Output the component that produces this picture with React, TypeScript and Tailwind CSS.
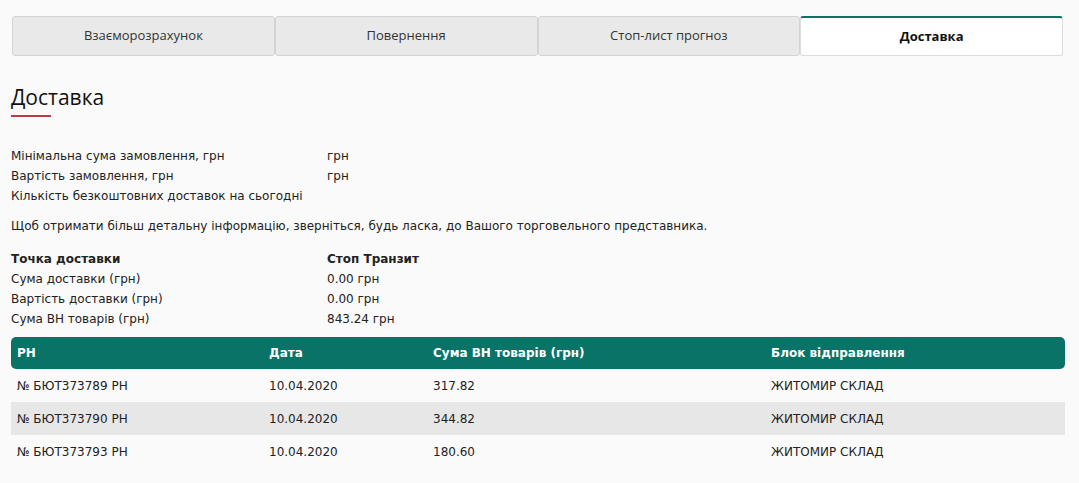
import { useState } from 'react'

const TABS = ['Взаєморозрахунок', 'Повернення', 'Стоп-лист прогноз', 'Доставка']

const SUMMARY = [
  { label: 'Мінімальна сума замовлення, грн', value: 'грн' },
  { label: 'Вартість замовлення, грн', value: 'грн' },
  { label: 'Кількість безкоштовних доставок на сьогодні', value: '' },
]

const POINT = [
  { label: 'Сума доставки (грн)', value: '0.00 грн' },
  { label: 'Вартість доставки (грн)', value: '0.00 грн' },
  { label: 'Сума ВН товарів (грн)', value: '843.24 грн' },
]

const ROWS = [
  { rn: '№ БЮТ373789 РН', date: '10.04.2020', sum: '317.82', block: 'ЖИТОМИР СКЛАД' },
  { rn: '№ БЮТ373790 РН', date: '10.04.2020', sum: '344.82', block: 'ЖИТОМИР СКЛАД' },
  { rn: '№ БЮТ373793 РН', date: '10.04.2020', sum: '180.60', block: 'ЖИТОМИР СКЛАД' },
]

export default function App() {
  const [tab, setTab] = useState(3)

  return (
    <div className="min-h-[483px] bg-[#fafafa] px-[11px] pt-[16px] text-[#222] font-['DejaVu_Sans',sans-serif] text-[12px]">
      <div className="flex ml-[1px] mr-[5px] h-[40px]">
        {TABS.map((t, i) => (
          <button key={t} onClick={() => setTab(i)}
            className={`flex-1 flex items-center justify-center rounded-[3px] border font-['Open_Sans',sans-serif] text-[13px] ${tab === i ? 'bg-white border-[#dcdcdc] border-t-2 border-t-[#0b7366] font-bold text-[#111]' : 'bg-[#e9e9e9] border-[#d4d4d4] text-[#333]'}`}>
            {t}
          </button>
        ))}
      </div>

      <h1 className="mt-[27px] font-['Open_Sans',sans-serif] text-[21px] leading-[28px] text-[#111]">Доставка</h1>
      <div className="mt-[4px] w-[40px] h-[2px] bg-[#c23a41]"></div>

      <div className="mt-[29px] flex flex-col">
        {SUMMARY.map(r => (
          <div key={r.label} className="flex h-[20px] items-center">
            <span className="w-[316px]">{r.label}</span>
            <span>{r.value}</span>
          </div>
        ))}
      </div>

      <p className="mt-[10px] leading-[20px]">
        Щоб отримати більш детальну інформацію, зверніться, будь ласка, до Вашого торговельного представника.
      </p>

      <div className="mt-[13px] flex flex-col">
        <div className="flex h-[20px] items-center font-bold">
          <span className="w-[316px]">Точка доставки</span>
          <span>Стоп Транзит</span>
        </div>
        {POINT.map(r => (
          <div key={r.label} className="flex h-[20px] items-center">
            <span className="w-[316px]">{r.label}</span>
            <span>{r.value}</span>
          </div>
        ))}
      </div>

      <table className="mt-[8px] w-[1054px] border-separate border-spacing-0">
        <thead>
          <tr className="text-white font-bold text-left">
            <th className="bg-[#0a7367] h-[32px] pl-[6px] w-[258px] rounded-l-[5px]">РН</th>
            <th className="bg-[#0a7367] w-[164px]">Дата</th>
            <th className="bg-[#0a7367] w-[338px]">Сума ВН товарів (грн)</th>
            <th className="bg-[#0a7367] rounded-r-[5px]">Блок відправлення</th>
          </tr>
        </thead>
        <tbody>
          {ROWS.map((r, i) => (
            <tr key={r.rn} className={i % 2 === 1 ? 'bg-[#e8e7e8]' : ''}>
              <td className="h-[33px] pl-[6px]">{r.rn}</td>
              <td>{r.date}</td>
              <td>{r.sum}</td>
              <td>{r.block}</td>
            </tr>
          ))}
        </tbody>
      </table>
    </div>
  )
}
